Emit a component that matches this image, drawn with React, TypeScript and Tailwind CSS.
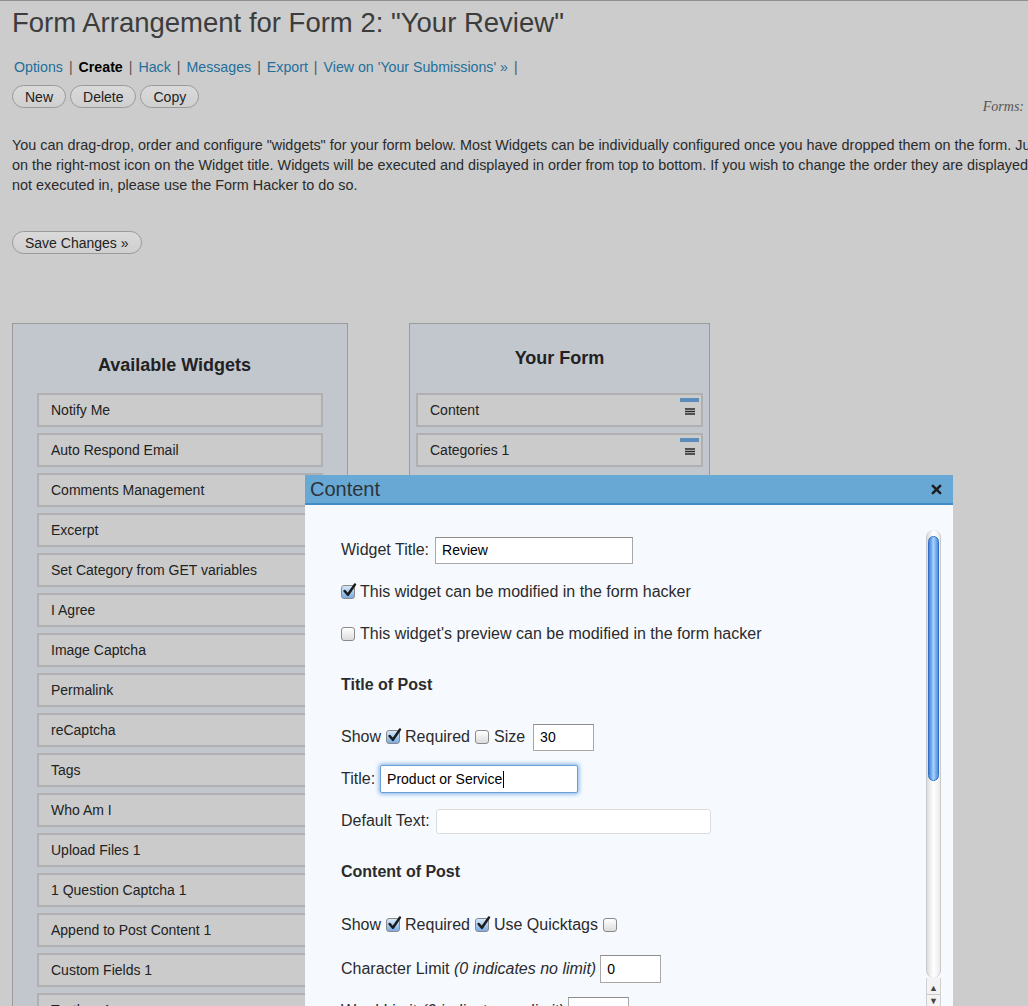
import React from 'react';

const sans = { fontFamily: '"Liberation Sans", Arial, Helvetica, sans-serif' };

const availableWidgets = [
  'Notify Me',
  'Auto Respond Email',
  'Comments Management',
  'Excerpt',
  'Set Category from GET variables',
  'I Agree',
  'Image Captcha',
  'Permalink',
  'reCaptcha',
  'Tags',
  'Who Am I',
  'Upload Files 1',
  '1 Question Captcha 1',
  'Append to Post Content 1',
  'Custom Fields 1',
  'Textbox 1',
];

const navLinks = [
  { label: 'Options' },
  { label: 'Create', current: true },
  { label: 'Hack' },
  { label: 'Messages' },
  { label: 'Export' },
  { label: "View on 'Your Submissions' »" },
];

function PillButton({ children }: { children: React.ReactNode }) {
  return (
    <button className="h-[23px] rounded-full border border-[#9a9a9a] bg-gradient-to-b from-[#dadada] to-[#cfcfcf] px-[12px] text-[14px] leading-none text-[#222]">
      {children}
    </button>
  );
}

function Checkbox({ checked }: { checked?: boolean }) {
  return (
    <span
      className={`relative inline-flex h-[14px] w-[14px] shrink-0 items-center justify-center rounded-[3px] border border-[#8a8a8a] ${
        checked ? 'bg-gradient-to-b from-[#d6e8f9] to-[#79aee3]' : 'bg-gradient-to-b from-white to-[#dcdcdc]'
      }`}
    >
      {checked && (
        <svg viewBox="0 0 14 14" className="absolute -top-[3px] left-0 h-[15px] w-[15px]">
          <path d="M2.5 7.5 L5.5 11 L12 1.5" fill="none" stroke="#1b1b1b" strokeWidth="2.4" strokeLinecap="round" strokeLinejoin="round" />
        </svg>
      )}
    </span>
  );
}

function TextInput({ value, className }: { value?: string; className: string }) {
  return (
    <div className={`flex shrink-0 items-center border border-[#a8a8a8] border-t-[#8c8c8c] bg-white px-[6px] text-[14px] text-black ${className}`}>
      {value}
    </div>
  );
}

function Row({ children, className = '' }: { children: React.ReactNode; className?: string }) {
  return <div className={`flex h-[42px] shrink-0 items-center whitespace-nowrap ${className}`}>{children}</div>;
}

function Scrollbar() {
  return (
    <div className="mr-[12px] mt-[25px] flex w-[15px] shrink-0 flex-col">
      <div className="relative h-[448px] shrink-0 rounded-full border-x border-[#c9c9c9] bg-gradient-to-r from-[#dedede] via-white to-[#ececec]">
        <div className="absolute left-[1px] right-[1px] top-[6px] h-[245px] rounded-full border border-[#2f6fc4] bg-gradient-to-r from-[#3d83db] via-[#a9d1f7] to-[#4b8fe0]" />
      </div>
      <div className="flex flex-1 flex-col items-center border-x border-[#d0d0d0] bg-[#f3f3f3]">
        <span className="mt-[4px] text-[9px] leading-[12px] text-[#444]">▲</span>
        <span className="w-full border-t border-[#c8c8c8]" />
        <span className="text-[9px] leading-[12px] text-[#444]">▼</span>
      </div>
    </div>
  );
}

function ContentDialog() {
  return (
    <div className="absolute bottom-0 left-[305px] top-[474px] flex w-[648px] flex-col bg-[#f6faff] text-[16px] text-[#2b2b2b]">
      <div className="flex h-[30px] shrink-0 items-center justify-between border-b-2 border-[#3f8cc6] bg-[#68a8d5] pl-[5px] pr-[11px]">
        <span className="text-[20px] text-[#2e3338]">Content</span>
        <svg viewBox="0 0 12 12" className="h-[11px] w-[11px]">
          <path d="M2 2 L10 10 M10 2 L2 10" stroke="#1f1f1f" strokeWidth="2.8" strokeLinecap="round" />
        </svg>
      </div>
      <div className="flex min-h-0 flex-1 overflow-hidden">
        <div className="flex flex-1 flex-col pl-[36px] pt-[24px]">
          <Row>
            <span>Widget Title:</span>
            <TextInput value="Review" className="ml-[6px] h-[27px] w-[198px]" />
          </Row>
          <Row className="gap-[5px]">
            <Checkbox checked />
            <span>This widget can be modified in the form hacker</span>
          </Row>
          <Row className="gap-[5px]">
            <Checkbox />
            <span>This widget's preview can be modified in the form hacker</span>
          </Row>
          <Row className="mt-[9px] font-bold">Title of Post</Row>
          <Row className="mt-[10px] gap-[5px]">
            <span>Show</span>
            <Checkbox checked />
            <span>Required</span>
            <Checkbox />
            <span>Size</span>
            <TextInput value="30" className="ml-[3px] h-[27px] w-[61px]" />
          </Row>
          <Row>
            <span>Title:</span>
            <div className="ml-[5px] flex h-[28px] w-[198px] shrink-0 items-center rounded-[2px] border border-[#6b9fd6] bg-white px-[6px] text-[14px] text-black shadow-[0_0_4px_1px_rgba(84,150,220,0.75)]">
              Product or Service
              <span className="ml-px h-[17px] w-px bg-black" />
            </div>
          </Row>
          <Row>
            <span>Default Text:</span>
            <div className="ml-[6px] h-[25px] w-[275px] shrink-0 rounded-[3px] border border-[#dcdcdc] bg-white" />
          </Row>
          <Row className="mt-[9px] font-bold">Content of Post</Row>
          <Row className="mt-[11px] gap-[5px]">
            <span>Show</span>
            <Checkbox checked />
            <span>Required</span>
            <Checkbox checked />
            <span>Use Quicktags</span>
            <Checkbox />
          </Row>
          <Row className="mt-[2px]">
            <span>
              Character Limit <i>(0 indicates no limit)</i>
            </span>
            <TextInput value="0" className="ml-[4px] h-[28px] w-[61px]" />
          </Row>
          <Row>
            <span>
              Word Limit <i>(0 indicates no limit)</i>
            </span>
            <TextInput className="ml-[4px] h-[28px] w-[61px]" />
          </Row>
        </div>
        <Scrollbar />
      </div>
    </div>
  );
}

export default function App() {
  return (
    <div
      className="relative h-[1006px] w-[1028px] overflow-hidden border-t border-[#8f8f8f] bg-[#cccccc] text-[#333]"
      style={sans}
    >
      <div className="flex flex-col pl-[12px]">
        <h1 className="mt-[4px] h-[36px] whitespace-nowrap text-[27.5px] font-normal leading-[36px] text-[#3c3c3c]">
          Form Arrangement for Form 2: "Your Review"
        </h1>

        <nav className="mt-[17px] flex h-[20px] items-center whitespace-nowrap pl-[2px] text-[14.2px]">
          {navLinks.map((link) => (
            <React.Fragment key={link.label}>
              <a className={link.current ? 'font-bold text-black' : 'text-[#1f6f9a]'}>{link.label}</a>
              <span className="mx-[6px] text-[#555]">|</span>
            </React.Fragment>
          ))}
        </nav>

        <div className="mt-[7px] flex h-[23px] items-start justify-between pr-[4px]">
          <div className="flex gap-[4px]">
            <PillButton>New</PillButton>
            <PillButton>Delete</PillButton>
            <PillButton>Copy</PillButton>
          </div>
          <span className="mt-[14px] text-[14px] italic leading-[16px] text-[#555]" style={{ fontFamily: '"Liberation Serif", Georgia, serif' }}>
            Forms:
          </span>
        </div>

        <div className="mt-[27px] whitespace-nowrap text-[14.4px] leading-[20px] text-[#2a2a2a]">
          <p>
            You can drag-drop, order and configure "widgets" for your form below. Most Widgets can be individually configured once you have dropped them on the form. Just click
          </p>
          <p>
            on the right-most icon on the Widget title. Widgets will be executed and displayed in order from top to bottom. If you wish to change the order they are displayed in but
          </p>
          <p>not executed in, please use the Form Hacker to do so.</p>
        </div>

        <div className="mt-[36px] flex">
          <PillButton>Save Changes »</PillButton>
        </div>

        <div className="mt-[69px] flex items-start gap-[61px]">
          <section className="w-[336px] shrink-0 border border-[#9b9b9b] bg-[#c2c7ce] px-[24px] pb-[20px] pt-[29px]">
            <h2 className="mb-[16px] pr-[11px] text-center text-[18px] font-bold leading-[24px] text-[#222]">Available Widgets</h2>
            <div className="flex flex-col gap-[6px]">
              {availableWidgets.map((w) => (
                <div
                  key={w}
                  className="flex h-[34px] items-center border-2 border-[#b0b0b0] bg-[#cbcbcb] pl-[12px] text-[14px] text-[#222]"
                >
                  {w}
                </div>
              ))}
            </div>
          </section>

          <section className="w-[301px] shrink-0 border border-[#9b9b9b] bg-[#c2c7ce] px-[6px] pb-[10px] pt-[22px]">
            <h2 className="mb-[23px] text-center text-[18px] font-bold leading-[24px] text-[#222]">Your Form</h2>
            <div className="flex flex-col gap-[6px]">
              {['Content', 'Categories 1'].map((w) => (
                <div
                  key={w}
                  className="flex h-[34px] items-stretch justify-between border-2 border-[#b0b0b0] bg-[#cbcbcb] pl-[12px] pr-[2px] text-[14px] text-[#222]"
                >
                  <span className="self-center">{w}</span>
                  <div className="flex flex-col items-center pt-[3px]">
                    <span className="h-[4px] w-[19px] bg-[#5b8dba]" />
                    <svg viewBox="0 0 10 7" className="mt-[6px] h-[7px] w-[10px]">
                      <path d="M0 1 H10 M0 3.5 H10 M0 6 H10" stroke="#2a2a2a" strokeWidth="1.3" />
                    </svg>
                  </div>
                </div>
              ))}
            </div>
          </section>
        </div>
      </div>

      <ContentDialog />
    </div>
  );
}
